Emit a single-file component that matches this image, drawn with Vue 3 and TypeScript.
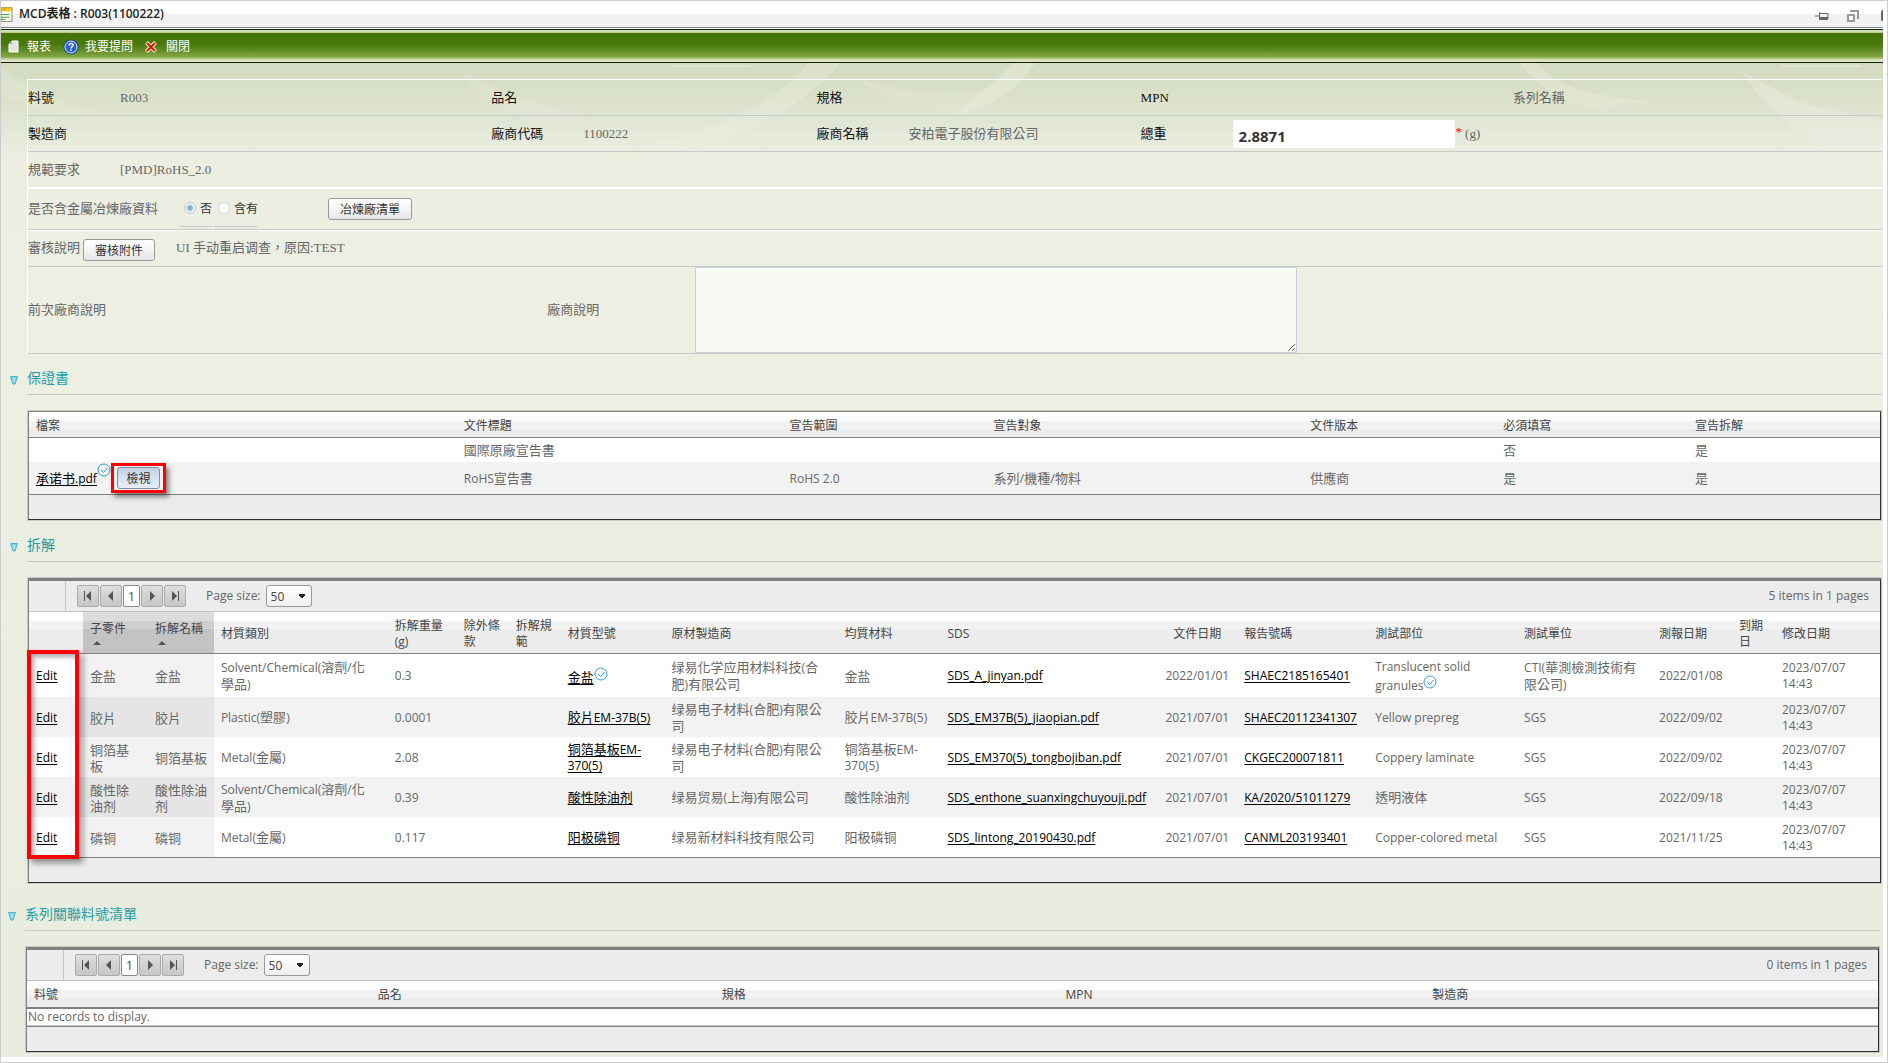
<script setup lang="ts">
import { ref } from 'vue'

interface Column {
  title: string
  width: number
  kind?: 'sorted' | 'date'
}

interface Part {
  sub: string
  name: string
  category: string
  weight: string
  model: string
  verified?: boolean
  maker: string
  material: string
  sds: string
  docDate: string
  reportNo: string
  spot: string
  lab: string
  reportDate: string
  modified: string
}

const weight = ref('2.8871')
const smelter = ref('no')
const vendorNote = ref('')
const pageSize = ref('50')
const relatedPageSize = ref('50')

const docColumns: Column[] = [
  { title: '檔案', width: 428 },
  { title: '文件標題', width: 326 },
  { title: '宣告範圍', width: 204 },
  { title: '宣告對象', width: 317 },
  { title: '文件版本', width: 193 },
  { title: '必須填寫', width: 192 },
  { title: '宣告拆解', width: 192 },
]

const partColumns: Column[] = [
  { title: '', width: 54 },
  { title: '子零件', width: 65, kind: 'sorted' },
  { title: '拆解名稱', width: 66, kind: 'sorted' },
  { title: '材質類別', width: 174 },
  { title: '拆解重量\n(g)', width: 69 },
  { title: '除外條\n款', width: 52 },
  { title: '拆解規\n範', width: 52 },
  { title: '材質型號', width: 104 },
  { title: '原材製造商', width: 173 },
  { title: '均質材料', width: 103 },
  { title: 'SDS', width: 217 },
  { title: '文件日期', width: 80, kind: 'date' },
  { title: '報告號碼', width: 131 },
  { title: '測試部位', width: 149 },
  { title: '測試單位', width: 135 },
  { title: '測報日期', width: 80 },
  { title: '到期\n日', width: 43 },
  { title: '修改日期', width: 105 },
]

const relatedColumns: Column[] = [
  { title: '料號', width: 344 },
  { title: '品名', width: 344 },
  { title: '規格', width: 344 },
  { title: 'MPN', width: 367 },
  { title: '製造商', width: 453 },
]

const parts: Part[] = [
  {
    sub: '金盐', name: '金盐', category: 'Solvent/Chemical(溶劑/化\n學品)', weight: '0.3', model: '金盐', verified: true,
    maker: '绿易化学应用材料科技(合\n肥)有限公司', material: '金盐', sds: 'SDS_A_jinyan.pdf', docDate: '2022/01/01',
    reportNo: 'SHAEC2185165401', spot: 'Translucent solid\ngranules', lab: 'CTI(華測檢測技術有\n限公司)', reportDate: '2022/01/08', modified: '2023/07/07\n14:43',
  },
  {
    sub: '胶片', name: '胶片', category: 'Plastic(塑膠)', weight: '0.0001', model: '胶片EM-37B(5)',
    maker: '绿易电子材料(合肥)有限公\n司', material: '胶片EM-37B(5)', sds: 'SDS_EM37B(5)_jiaopian.pdf', docDate: '2021/07/01',
    reportNo: 'SHAEC20112341307', spot: 'Yellow prepreg', lab: 'SGS', reportDate: '2022/09/02', modified: '2023/07/07\n14:43',
  },
  {
    sub: '铜箔基\n板', name: '铜箔基板', category: 'Metal(金屬)', weight: '2.08', model: '铜箔基板EM-\n370(5)',
    maker: '绿易电子材料(合肥)有限公\n司', material: '铜箔基板EM-\n370(5)', sds: 'SDS_EM370(5)_tongbojiban.pdf', docDate: '2021/07/01',
    reportNo: 'CKGEC200071811', spot: 'Coppery laminate', lab: 'SGS', reportDate: '2022/09/02', modified: '2023/07/07\n14:43',
  },
  {
    sub: '酸性除\n油剂', name: '酸性除油\n剂', category: 'Solvent/Chemical(溶劑/化\n學品)', weight: '0.39', model: '酸性除油剂',
    maker: '绿易贸易(上海)有限公司', material: '酸性除油剂', sds: 'SDS_enthone_suanxingchuyouji.pdf', docDate: '2021/07/01',
    reportNo: 'KA/2020/51011279', spot: '透明液体', lab: 'SGS', reportDate: '2022/09/18', modified: '2023/07/07\n14:43',
  },
  {
    sub: '磷铜', name: '磷铜', category: 'Metal(金屬)', weight: '0.117', model: '阳极磷铜',
    maker: '绿易新材料科技有限公司', material: '阳极磷铜', sds: 'SDS_lintong_20190430.pdf', docDate: '2021/07/01',
    reportNo: 'CANML203193401', spot: 'Copper-colored metal', lab: 'SGS', reportDate: '2021/11/25', modified: '2023/07/07\n14:43',
  },
]

const share = (width: number, columns: Column[]) =>
  `${(width / columns.reduce((sum, c) => sum + c.width, 0)) * 100}%`

/** Han text is set one size larger than Latin text. */
const isHan = (text: string) => /^[\u4e00-\u9fff]/.test(text)
const runs = (text: string) => text.match(/[\u4e00-\u9fff]+|\n|[^\u4e00-\u9fff\n]+/g) ?? []
</script>

<template>
  <div class="window">
    <header class="titlebar">
      <svg class="form-icon" viewBox="0 0 13 17" aria-hidden="true">
        <path d="M0 1h12v15H0z" fill="#fffdf0" stroke="#8a8a6a" />
        <path d="M0 1h12v4H0z" fill="#f0b400" />
        <path d="M6 3h1M9 3h1" stroke="#fff" stroke-width="2" />
        <path d="M0 8.500h9M0 11.500h9M0 14h5" stroke="#3c9a3c" />
      </svg>
      <h1>MCD表格 : R003(1100222)</h1>
      <div class="window-tools">
        <button type="button" aria-label="Pin">
          <svg width="14" height="12" viewBox="0 0 14 12"><path d="M0 6h4M4.500 2v8M5 3.500h8v5H5" fill="none" stroke="#666" /><path d="M5 7h8v3H5z" fill="#666" /></svg>
        </button>
        <button type="button" aria-label="Restore">
          <svg width="12" height="12" viewBox="0 0 12 12"><path d="M3 1h8v8" fill="none" stroke="#999" stroke-width="2" /><path d="M1 5h6v6H1z" fill="#fff" stroke="#999" stroke-width="2" /></svg>
        </button>
        <button type="button" aria-label="Close">
          <svg width="2" height="12" viewBox="0 0 2 12"><path d="M2 0H1L0 2v8l1 1h1z" fill="#666" /></svg>
        </button>
      </div>
    </header>

    <nav class="toolbar">
      <button type="button">
        <svg width="11" height="14" viewBox="0 0 11 14"><path d="M4 1h6v11H1V4z" fill="#e4e4e4" stroke="#fff" /><path d="M4 1v3H1z" fill="#aaa" /></svg>
        <span>報表</span>
      </button>
      <button type="button">
        <svg width="16" height="16" viewBox="0 0 16 16"><circle cx="8" cy="8" r="7" fill="#2a62d0" stroke="#17408f" /><circle cx="8" cy="8" r="6" fill="none" stroke="#dce9ff" /><path d="M6 6.500c0-3 4.500-2.500 4 0C9.800 7.700 8 7.700 8 9.500M8 10.500V12" fill="none" stroke="#fff" stroke-width="1.500" /></svg>
        <span>我要提問</span>
      </button>
      <button type="button">
        <svg width="12" height="12" viewBox="0 0 12 12"><path d="M1.500 1.500l9 9M10.500 1.500l-9 9" stroke="#fff3d8" stroke-width="4" /><path d="M2 2l8 8M10 2l-8 8" stroke="#d81400" stroke-width="2" /></svg>
        <span>關閉</span>
      </button>
    </nav>

    <main>
      <svg class="backdrop" viewBox="0 0 1882 128" preserveAspectRatio="none" aria-hidden="true">
        <path d="M808 0H840Q800 46 730 74Q660 96 600 92Q760 62 808 0Z" fill="#edf1e2" opacity=".3" />
        <path d="M1014 0H1034Q1010 40 950 54Q980 30 1014 0Z" fill="#edf0df" opacity=".4" />
        <path d="M852 14Q930 40 1010 22L960 52L900 42Z" fill="#e4e8d3" opacity=".35" />
        <path d="M1518 0H1536Q1560 32 1650 38L1590 46Q1545 34 1518 0Z" fill="#e9ecd8" opacity=".45" />
        <path d="M1740 8L1800 40L1882 58V102Q1790 84 1740 8Z" fill="#eef2e4" opacity=".35" />
        <path d="M0 6L60 40L140 60Q60 62 0 30Z" fill="#eaeddc" opacity=".3" />
        <path d="M460 10L520 34L600 60L540 62Q480 40 460 10Z" fill="#e9ecda" opacity=".25" />
        <path d="M670 3h80M1780 3h80" stroke="#e6e9d0" stroke-width="2" opacity=".6" />
      </svg>

      <form class="sheet" @submit.prevent>
        <div class="row grid ink">
          <div class="pair"><span class="label">料號</span><span class="value">R003</span></div>
          <div class="pair"><span class="label">品名</span></div>
          <div class="pair"><span class="label">規格</span></div>
          <div class="pair"><span class="label">MPN</span></div>
          <div class="pair"><span class="value">系列名稱</span></div>
        </div>
        <div class="row grid ink">
          <div class="pair"><span class="label">製造商</span></div>
          <div class="pair"><span class="label">廠商代碼</span><span class="value">1100222</span></div>
          <div class="pair"><span class="label">廠商名稱</span><span class="value">安柏電子股份有限公司</span></div>
          <div class="pair weight">
            <label class="label" for="weight">總重</label>
            <input id="weight" v-model="weight" type="text" />
            <span class="required">*</span><span class="value">(g)</span>
          </div>
        </div>
        <div class="row">
          <div class="pair"><span class="label">規範要求</span><span>[PMD]RoHS_2.0</span></div>
        </div>
        <div class="row smelter">
          <span class="question">是否含金屬冶煉廠資料</span>
          <div class="choices">
            <label><input v-model="smelter" type="radio" name="smelter" value="no" />否</label>
            <label><input v-model="smelter" type="radio" name="smelter" value="yes" />含有</label>
          </div>
          <button type="button" class="btn">冶煉廠清單</button>
        </div>
        <div class="row review">
          <span>審核說明</span>
          <button type="button" class="btn">審核附件</button>
          <span class="reason">UI 手动重启调查，原因:TEST</span>
        </div>
        <div class="row notes">
          <span>前次廠商說明</span>
          <label for="note">廠商說明</label>
          <textarea id="note" v-model="vendorNote"></textarea>
        </div>
      </form>

      <section>
        <h2><svg width="8" height="9" viewBox="0 0 8 9" aria-hidden="true"><path d="M.5.500h7L5 8H3z" fill="#7fd4e2" stroke="#4fb4c6" /><path d="M4 2v4" stroke="#d8f4f8" /></svg>保證書</h2>
        <div class="panel">
          <table>
            <colgroup><col v-for="c in docColumns" :key="c.title" :style="{ width: share(c.width, docColumns) }" /></colgroup>
            <thead><tr class="short"><th v-for="c in docColumns" :key="c.title" scope="col">{{ c.title }}</th></tr></thead>
            <tbody>
              <tr class="short han">
                <td></td><td>國際原廠宣告書</td><td></td><td></td><td></td><td>否</td><td>是</td>
              </tr>
              <tr class="file han">
                <td>
                  <div class="file-cell">
                    <a href="#">承诺书<span class="latin">.pdf</span></a>
                    <svg class="check" viewBox="0 0 14 14" role="img" aria-label="verified"><circle cx="7" cy="7" r="6" fill="none" stroke="#2ba0de" /><path d="M4 7l2.500 2.500L10.500 5" fill="none" stroke="#2ba0de" /></svg>
                    <span class="view-mark"><button type="button" class="btn active">檢視</button></span>
                  </div>
                </td>
                <td><span class="latin">RoHS</span>宣告書</td>
                <td><span class="latin">RoHS 2.0</span></td>
                <td>系列/機種/物料</td><td>供應商</td><td>是</td><td>是</td>
              </tr>
            </tbody>
          </table>
          <div class="foot"></div>
        </div>
      </section>

      <section>
        <h2><svg width="8" height="9" viewBox="0 0 8 9" aria-hidden="true"><path d="M.5.500h7L5 8H3z" fill="#7fd4e2" stroke="#4fb4c6" /><path d="M4 2v4" stroke="#d8f4f8" /></svg>拆解</h2>
        <div class="panel paged">
          <div class="pager">
            <span class="gutter"></span>
            <div class="pages">
              <button type="button" aria-label="First page"><svg viewBox="0 0 12 12"><path d="M2.500 1v10" stroke="#555" /><path d="M9 1v10L4 6z" fill="#555" /></svg></button>
              <button type="button" aria-label="Previous page"><svg viewBox="0 0 12 12"><path d="M8 1v10L3 6z" fill="#555" /></svg></button>
              <button type="button" class="current">1</button>
              <button type="button" aria-label="Next page"><svg viewBox="0 0 12 12"><path d="M4 1v10l5-5z" fill="#555" /></svg></button>
              <button type="button" aria-label="Last page"><svg viewBox="0 0 12 12"><path d="M3 1v10l5-5z" fill="#555" /><path d="M9.500 1v10" stroke="#555" /></svg></button>
            </div>
            <label for="size">Page size:</label>
            <select id="size" v-model="pageSize"><option>50</option></select>
            <span class="count">5 items in 1 pages</span>
          </div>
          <div class="table-wrap">
            <table>
              <colgroup><col v-for="c in partColumns" :key="c.title" :style="{ width: share(c.width, partColumns) }" /></colgroup>
              <thead>
                <tr class="tall">
                  <th v-for="c in partColumns" :key="c.title" scope="col" :class="c.kind">{{ c.title }}<i v-if="c.kind === 'sorted'" class="arrow"></i></th>
                </tr>
              </thead>
              <tbody>
                <tr v-for="(p, i) in parts" :key="p.sds" :class="{ first: i === 0 }">
                  <td><a href="#">Edit</a></td>
                  <td class="sorted han">{{ p.sub }}</td>
                  <td class="sorted han">{{ p.name }}</td>
                  <td><span v-for="(r, k) in runs(p.category)" :key="k" :class="{ han: isHan(r) }">{{ r }}</span></td>
                  <td>{{ p.weight }}</td>
                  <td></td>
                  <td></td>
                  <td>
                    <a href="#"><span v-for="(r, k) in runs(p.model)" :key="k" :class="{ han: isHan(r) }">{{ r }}</span></a><svg v-if="p.verified" class="check" viewBox="0 0 14 14" role="img" aria-label="verified"><circle cx="7" cy="7" r="6" fill="none" stroke="#2ba0de" /><path d="M4 7l2.500 2.500L10.500 5" fill="none" stroke="#2ba0de" /></svg>
                  </td>
                  <td><span v-for="(r, k) in runs(p.maker)" :key="k" :class="{ han: isHan(r) }">{{ r }}</span></td>
                  <td><span v-for="(r, k) in runs(p.material)" :key="k" :class="{ han: isHan(r) }">{{ r }}</span></td>
                  <td><a href="#">{{ p.sds }}</a></td>
                  <td class="date">{{ p.docDate }}</td>
                  <td><a href="#">{{ p.reportNo }}</a></td>
                  <td><span v-for="(r, k) in runs(p.spot)" :key="k" :class="{ han: isHan(r) }">{{ r }}</span><svg v-if="p.verified" class="check" viewBox="0 0 14 14" role="img" aria-label="verified"><circle cx="7" cy="7" r="6" fill="none" stroke="#2ba0de" /><path d="M4 7l2.500 2.500L10.500 5" fill="none" stroke="#2ba0de" /></svg></td>
                  <td><span v-for="(r, k) in runs(p.lab)" :key="k" :class="{ han: isHan(r) }">{{ r }}</span></td>
                  <td>{{ p.reportDate }}</td>
                  <td></td>
                  <td>{{ p.modified }}</td>
                </tr>
              </tbody>
            </table>
            <div class="edit-mark"></div>
          </div>
          <div class="foot"></div>
        </div>
      </section>

      <section class="related">
        <h2><svg width="8" height="9" viewBox="0 0 8 9" aria-hidden="true"><path d="M.5.500h7L5 8H3z" fill="#7fd4e2" stroke="#4fb4c6" /><path d="M4 2v4" stroke="#d8f4f8" /></svg>系列關聯料號清單</h2>
        <div class="panel paged">
          <div class="pager">
            <span class="gutter"></span>
            <div class="pages">
              <button type="button" aria-label="First page"><svg viewBox="0 0 12 12"><path d="M2.500 1v10" stroke="#555" /><path d="M9 1v10L4 6z" fill="#555" /></svg></button>
              <button type="button" aria-label="Previous page"><svg viewBox="0 0 12 12"><path d="M8 1v10L3 6z" fill="#555" /></svg></button>
              <button type="button" class="current">1</button>
              <button type="button" aria-label="Next page"><svg viewBox="0 0 12 12"><path d="M4 1v10l5-5z" fill="#555" /></svg></button>
              <button type="button" aria-label="Last page"><svg viewBox="0 0 12 12"><path d="M3 1v10l5-5z" fill="#555" /><path d="M9.500 1v10" stroke="#555" /></svg></button>
            </div>
            <label for="related-size">Page size:</label>
            <select id="related-size" v-model="relatedPageSize"><option>50</option></select>
            <span class="count">0 items in 1 pages</span>
          </div>
          <table>
            <colgroup><col v-for="c in relatedColumns" :key="c.title" :style="{ width: share(c.width, relatedColumns) }" /></colgroup>
            <thead><tr class="short"><th v-for="c in relatedColumns" :key="c.title" scope="col">{{ c.title }}</th></tr></thead>
            <tbody><tr class="none"><td colspan="5">No records to display.</td></tr></tbody>
          </table>
          <div class="foot"></div>
        </div>
      </section>
    </main>
  </div>
</template>

<style>
body {
  margin: 0;
}
</style>

<style scoped>
* {
  box-sizing: border-box;
}

.window {
  min-height: 100vh;
  padding-right: 4px;
  border: 1px solid #ccc;
  background: #fff;
  font: 12px/16px 'Open Sans', 'Noto Sans CJK TC', sans-serif;
  color: #666;
}

button,
input,
select,
textarea {
  margin: 0;
  font-family: inherit;
}

/* Title bar */
.titlebar {
  display: flex;
  align-items: center;
  height: 27px;
  border-bottom: 1px solid #808080;
  background: linear-gradient(#fff 50%, #f1f1f1 50%);
}

.form-icon {
  width: 12px;
  height: 17px;
}

h1 {
  margin: 0 0 0 6px;
  font-size: 12px;
  font-weight: 600;
  line-height: 26px;
  color: #222;
}

.window-tools {
  display: flex;
  gap: 18px;
  margin-left: auto;
  padding-top: 4px;
}

.window-tools button {
  display: flex;
  padding: 0;
  border: 0;
  background: none;
}

.window-tools button:last-child {
  margin-left: 4px;
}

/* Tool bar */
.toolbar {
  display: flex;
  align-items: center;
  gap: 12px;
  height: 34px;
  margin-top: 1px;
  padding: 1px 0 0 7px;
  border-top: 1px solid #0a2a10;
  border-bottom: 1px solid #10250a;
  background: linear-gradient(#d0dab4 0 2px, #bccb8c 2px 3px, #447408 3px, #49790c 14px, #5e8a22 20px, #87a747 27px, #c5d29b 29px, #dde4c4 30px);
}

.toolbar button {
  display: flex;
  align-items: center;
  gap: 6px;
  padding: 0;
  border: 0;
  background: none;
  font-size: 12px;
  line-height: 16px;
  color: #fff;
}

.toolbar button:first-child {
  gap: 8px;
}

.toolbar button:last-child {
  gap: 9px;
}

/* Body */
main {
  position: relative;
  padding: 16px 0 4px;
  background: linear-gradient(#d3dbc3 0, #d6dec6 20px, #dce1ca 36px, #dfe5d4 56px, #e5eadb 74px, #ebeee0 96px, #eceee2 130px, #eeefe3 240px, #ebeee1 440px, #e9eddf 840px, #e9eddf 100%);
}

.backdrop {
  position: absolute;
  top: 0;
  left: 0;
  width: 100%;
  height: 128px;
}

.sheet {
  position: relative;
  margin: 0 1px 0 26px;
  border-top: 1px solid #fff;
  border-left: 1px solid #fff;
  font: 13px/16px 'Liberation Serif', 'Noto Sans CJK TC', serif;
}

.row {
  min-height: 36px;
  border-bottom: 1px solid #c6c9c6;
}

.row:nth-child(3) {
  border-bottom: 2px solid #fff;
}

.grid {
  display: grid;
  grid-template-columns: 463fr 325fr 324fr 372fr 369fr;
}

.ink {
  color: #666;
}

.ink .label {
  color: #111;
}

.pair {
  display: flex;
  align-items: center;
  height: 35px;
}

.label {
  flex: none;
  width: 92px;
}

.weight input {
  width: 222px;
  height: 28px;
  padding: 4px 6px 0;
  border: 0;
  background: #fff;
  font: bold 15px 'Open Sans', sans-serif;
  color: #333;
}

.required {
  margin: 0 3px 4px 1px;
  color: #f00;
}

.smelter {
  display: flex;
  align-items: center;
  height: 41px;
  box-shadow: 0 1px #fff;
}

.question {
  width: 152px;
}

.choices {
  display: flex;
  gap: 2px;
  width: 148px;
  align-self: flex-end;
  margin-bottom: 2px;
}

.choices label {
  display: flex;
  gap: 4px;
  height: 31px;
  padding: 6px 0 0 4px;
  border-bottom: 1px solid #c6c9c6;
  font: 12px/12px 'Noto Sans CJK TC', sans-serif;
  color: #333;
}

.choices input {
  appearance: none;
  width: 12px;
  height: 12px;
  border: 1px solid #d4d8dc;
  border-radius: 50%;
  background: #fafafa;
}

.choices input:checked {
  border-color: #c0c8d0;
  background: radial-gradient(#6fa9ce 0 1px, #b4d3e6 3px, #f4f6f8 4px);
}

.btn {
  height: 22px;
  padding: 0 12px;
  border: 1px solid #999;
  border-radius: 3px;
  background: linear-gradient(#fff, #f4f4f4 50%, #e6e6e6);
  font: 12px/18px 'Noto Sans CJK TC', sans-serif;
  color: #333;
}

.smelter .btn {
  width: 84px;
  padding: 0;
}

.review {
  display: flex;
  align-items: center;
  height: 37px;
}

.review .btn {
  width: 72px;
  margin: 3px 21px 0 3px;
  padding: 0;
}

.notes {
  display: grid;
  grid-template-columns: 519fr 148fr 1186fr;
  align-items: center;
  height: 87px;
}

.notes textarea {
  display: block;
  width: 602px;
  max-width: 100%;
  height: 86px;
  border: 1px solid #c3cede;
  background: #f8faf4;
  font-size: 13px;
}

/* Sections */
section {
  padding: 0 1px 1px 26px;
}

.related {
  margin-top: 6px;
  padding: 0 3px 1px 24px;
}

h2 {
  display: flex;
  align-items: center;
  height: 41px;
  margin: 0 0 16px;
  padding: 8px 0 0;
  border-bottom: 1px solid #c9cbc9;
  font-size: 14px;
  font-weight: 400;
  line-height: 20px;
  color: #1f9da6;
}

h2 svg {
  margin: 4px 9px 0 -17px;
}

.panel {
  margin: 0 1px;
  border: 1px solid;
  border-color: #808080 #2b2b33 #2b2b33 #808080;
  background: #fff;
  box-shadow: 0 0 0 1px #c8c8c8;
}

.paged {
  border-top-width: 3px;
}

table {
  width: 100%;
  border-collapse: separate;
  border-spacing: 0;
  table-layout: fixed;
}

th,
td {
  padding: 0 0 0 7px;
  text-align: left;
  vertical-align: middle;
  white-space: pre-line;
}

th {
  padding-top: 2px;
  border-bottom: 1px solid #808080;
  background: linear-gradient(#fdfdfd 35%, #f2f2f2 35% 67%, #ececec 67%);
  font-size: 12px;
  font-weight: 400;
  color: #444;
}

.tall th {
  background: linear-gradient(#fff 22%, #f2f2f2 22% 42%, #ececec 42%);
}

.tall th.sorted {
  background: linear-gradient(#dcdcdc 22%, #cfcfcf 22% 42%, #c3c3c3 42%);
}

td.sorted {
  background: #f2f2f2;
}

tbody tr {
  height: 40px;
}

tbody tr.first {
  height: 43px;
}

tbody tr:nth-child(even) td {
  background: #f2f2f2;
}

tbody tr:nth-child(even) td.sorted {
  background: #e5e5e5;
}

.tall {
  height: 42px;
}

.table-wrap td {
  padding-top: 1px;
}

thead tr.short {
  height: 26px;
}

tbody tr.short {
  height: 24px;
}

tbody tr.file {
  height: 32px;
}

th.date,
td.date {
  padding-left: 0;
  text-align: center;
}

.han {
  font-size: 13px;
}

.latin {
  font-size: 12px;
}

a {
  color: #000;
  text-underline-offset: 2px;
}

.arrow {
  display: block;
  width: 0;
  margin: 4px 0 2px 3px;
  border: 4px solid transparent;
  border-top: 0;
  border-bottom-color: #555;
}

.check {
  width: 14px;
  height: 14px;
  vertical-align: 1px;
}

.file-cell {
  display: flex;
  align-items: center;
}

.file-cell .check {
  align-self: flex-start;
}

.view-mark {
  display: flex;
  border: 3px solid #f00;
  padding: 1px 3px;
  box-shadow: 3px 4px 5px #0007;
}

.btn.active {
  width: 43px;
  padding: 0;
  border-color: #7b8fa8;
  background: linear-gradient(#c3d0e2, #d8e4f2 60%, #e6effa);
}

.foot {
  height: 25px;
  border-top: 1px solid #808080;
  background: #ececec;
}

.table-wrap {
  position: relative;
}

.edit-mark {
  position: absolute;
  top: 38px;
  bottom: -2px;
  left: -2px;
  width: 52px;
  border: 4px solid #f00;
  box-shadow: 4px 4px 6px #0006, inset 3px 3px 5px #0005;
  pointer-events: none;
}

/* Pager */
.pager {
  display: flex;
  align-items: center;
  height: 31px;
  padding-right: 11px;
  border-bottom: 1px solid #c4c4c4;
  background: #ececec;
}

.gutter {
  align-self: stretch;
  width: 37px;
  border-right: 1px solid #c4c4c4;
}

.pages {
  display: flex;
  gap: 1px;
  margin: 0 20px 0 11px;
}

.pages button {
  display: flex;
  align-items: center;
  justify-content: center;
  width: 22px;
  height: 22px;
  padding: 0;
  border: 1px solid #aaa;
  border-radius: 2px;
  background: linear-gradient(#dedede, #c6c6c6);
}

.pages svg {
  width: 12px;
  height: 12px;
}

.pages .current {
  width: 17px;
  border-color: #888;
  background: #fff;
  font-size: 12px;
  color: #444;
}

select {
  appearance: none;
  width: 46px;
  height: 22px;
  margin-left: 5px;
  padding: 0 4px;
  border: 1px solid #999;
  border-radius: 3px;
  background: conic-gradient(from -37deg at 50% 100%, #222 74deg, transparent 0) 31px 8px / 8px 5px no-repeat, linear-gradient(#fff, #efefef);
  font-size: 12px;
  color: #444;
}

.count {
  margin-left: auto;
}

.related thead th {
  border-bottom-width: 2px;
}

.related thead tr.short {
  height: 28px;
}

.related .none {
  height: 17px;
}

.none td {
  padding: 0 0 0 1px;
  border-bottom: 1px solid #c4c4c4;
}
</style>
